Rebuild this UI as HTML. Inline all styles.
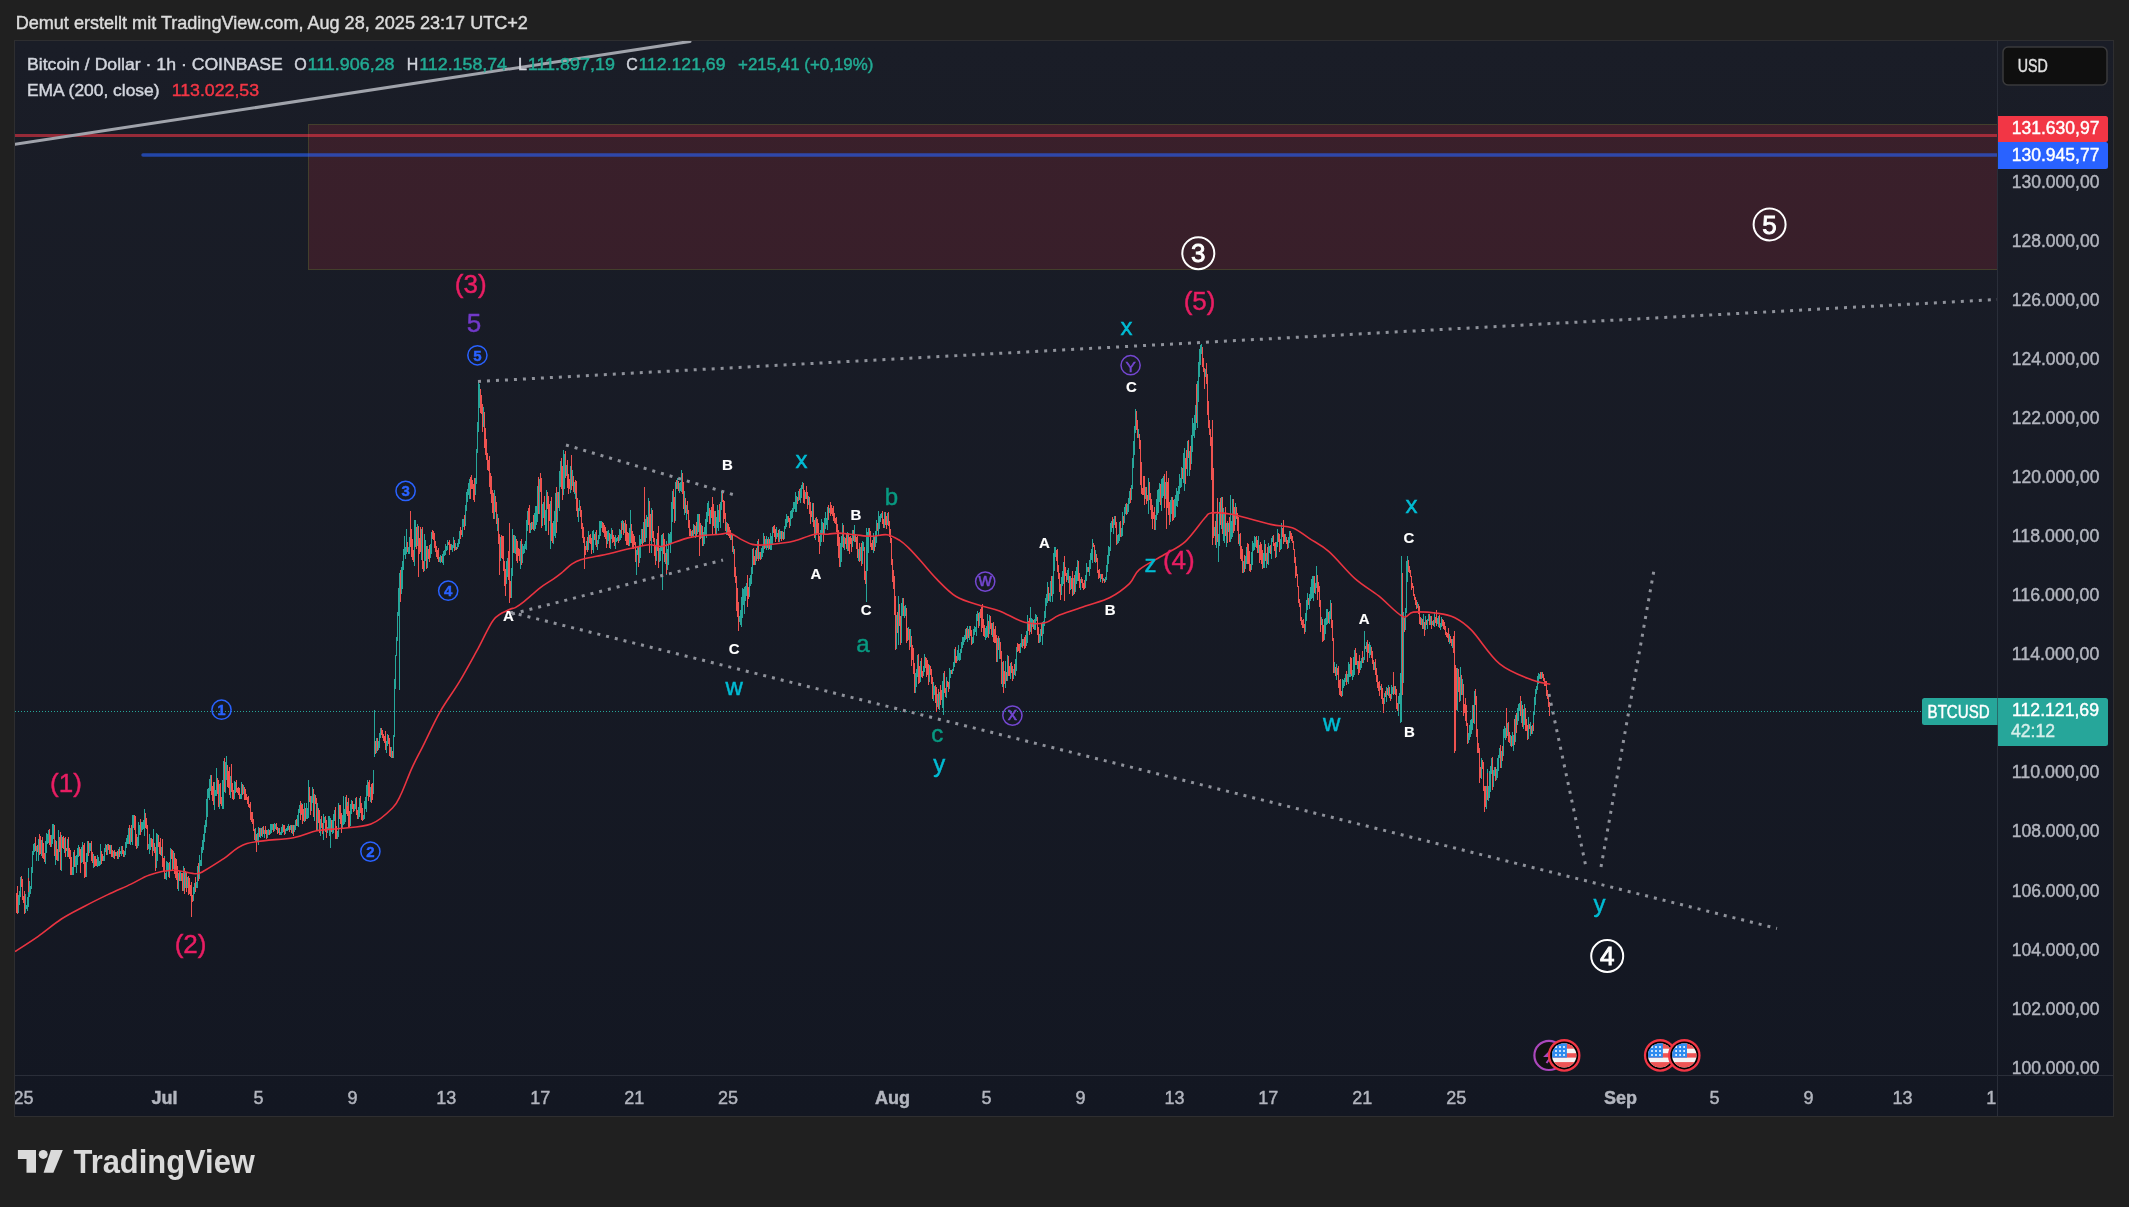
<!DOCTYPE html>
<html><head><meta charset="utf-8"><style>
html,body{margin:0;padding:0;background:#202020;width:2129px;height:1207px;overflow:hidden}
svg{position:absolute;left:0;top:0;font-family:"Liberation Sans", sans-serif}
</style></head><body>
<svg width="2129" height="1207" viewBox="0 0 2129 1207" style="will-change:transform">
<defs><clipPath id="taxis"><rect x="15" y="1076" width="1982" height="39"/></clipPath><clipPath id="paxis"><rect x="1998" y="41" width="115" height="1034"/></clipPath></defs>
<defs><linearGradient id="bg" x1="0" y1="0" x2="0" y2="1"><stop offset="0" stop-color="#1a1d27"/><stop offset="1" stop-color="#131722"/></linearGradient><clipPath id="pane"><rect x="15" y="41" width="1982" height="1034"/></clipPath></defs><rect x="14.5" y="40.5" width="2099" height="1076" fill="url(#bg)" stroke="#2e2e30" stroke-width="1"/><path d="M1997.5 41V1116M15 1075.5H2113" stroke="#2a2e39" stroke-width="1" fill="none"/><g clip-path="url(#pane)"><rect x="308.5" y="124.5" width="1700" height="145" fill="#f23645" fill-opacity="0.15" stroke="#433f2c" stroke-width="1"/><path d="M15 135.5H1997" stroke="#f23645" stroke-opacity="0.58" stroke-width="3"/><path d="M143 155H1997" stroke="#2962ff" stroke-opacity="0.6" stroke-width="3.5" stroke-linecap="round"/><path d="M15 144.3L690 41.4" stroke="#a0a3ab" stroke-width="3" stroke-linecap="round"/><path d="M15 711.5H1997" stroke="#26a69a" stroke-width="1" stroke-dasharray="1 2"/><g shape-rendering="crispEdges" stroke-width="1"><path d="M18.5 895V913M19.5 891V905M20.5 877V897M25.5 894V913M26.5 905V909M27.5 897V911M28.5 868V907M29.5 881V897M30.5 886V894M31.5 867V889M32.5 851V873M33.5 844V855M34.5 843V852M36.5 846V861M38.5 839V861M41.5 840V856M45.5 841V864M46.5 833V853M47.5 834V844M48.5 830V843M51.5 835V847M52.5 824V844M53.5 824V839M55.5 840V865M58.5 830V861M61.5 835V871M64.5 838V853M67.5 839V857M72.5 867V875M73.5 863V875M73.5 852V871M75.5 856V867M76.5 855V873M77.5 848V865M78.5 845V857M81.5 847V863M82.5 842V862M86.5 853V877M87.5 841V862M89.5 843V853M90.5 843V851M93.5 854V868M97.5 855V867M98.5 857V866M99.5 861V866M100.5 844V865M103.5 856V861M104.5 848V861M105.5 844V852M107.5 844V855M110.5 845V854M113.5 851V858M116.5 852V856M118.5 849V859M119.5 847V855M120.5 851V854M121.5 846V856M124.5 851V857M125.5 842V855M126.5 838V848M127.5 835V844M128.5 828V844M130.5 828V845M132.5 815V845M133.5 815V828M137.5 837V848M138.5 822V846M139.5 825V835M141.5 822V832M142.5 822V830M143.5 820V829M144.5 809V836M148.5 844V849M149.5 834V854M150.5 838V850M153.5 829V851M156.5 833V868M157.5 834V861M161.5 847V856M164.5 856V867M165.5 873V879M166.5 861V880M167.5 862V870M168.5 863V877M170.5 848V870M173.5 851V869M178.5 873V891M180.5 871V881M183.5 866V891M185.5 871V888M187.5 877V888M193.5 887V901M194.5 883V894M196.5 882V888M197.5 866V888M199.5 855V879M200.5 860V866M201.5 847V866M202.5 840V853M203.5 834V850M204.5 825V842M205.5 820V833M206.5 799V827M207.5 789V817M208.5 788V798M209.5 779V800M210.5 779V791M210.5 775V790M214.5 782V810M215.5 790V796M216.5 768V796M219.5 784V809M222.5 780V809M223.5 761V809M225.5 762V793M226.5 756V780M230.5 776V798M234.5 781V799M235.5 782V793M240.5 794V799M241.5 782V799M243.5 785V794M255.5 828V841M256.5 834V846M257.5 833V841M258.5 827V845M260.5 828V838M262.5 827V837M264.5 830V838M267.5 830V838M268.5 829V835M270.5 824V834M271.5 824V833M272.5 824V830M274.5 823V831M275.5 824V829M278.5 828V833M280.5 832V835M281.5 827V835M282.5 824V833M285.5 829V834M286.5 828V831M287.5 826V831M288.5 824V830M290.5 825V830M292.5 825V834M294.5 825V832M295.5 820V830M297.5 815V826M298.5 809V827M299.5 805V813M301.5 803V815M304.5 803V822M306.5 803V819M307.5 808V819M308.5 780V818M311.5 796V811M312.5 787V803M314.5 794V821M317.5 803V830M320.5 819V836M323.5 814V840M324.5 817V823M327.5 827V833M328.5 816V830M329.5 816V836M330.5 818V848M332.5 820V834M333.5 814V833M334.5 810V821M337.5 831V839M338.5 803V837M342.5 815V828M343.5 796V825M344.5 809V824M345.5 797V822M347.5 802V816M350.5 804V826M351.5 800V814M354.5 804V811M355.5 798V809M358.5 807V819M359.5 798V817M363.5 815V820M364.5 801V819M365.5 797V809M366.5 785V812M367.5 780V796M370.5 787V802M373.5 770V794M374.5 710V757M376.5 738V753M378.5 741V750M379.5 733V748M380.5 728V738M386.5 741V753M387.5 734V746M391.5 747V758M393.5 742V758M393.5 735V751M394.5 679V737M395.5 655V689M396.5 637V656M397.5 612V641M398.5 588V616M399.5 573V690M401.5 567V594M402.5 561V589M403.5 549V570M404.5 536V555M405.5 547V559M406.5 529V554M408.5 547V554M409.5 537V554M414.5 520V566M415.5 520V547M417.5 524V546M421.5 529V560M424.5 534V571M425.5 540V561M427.5 546V568M430.5 544V558M431.5 532V554M439.5 557V562M440.5 555V563M442.5 554V563M443.5 551V565M444.5 550V556M445.5 544V555M446.5 546V551M447.5 540V550M451.5 544V550M452.5 545V552M453.5 537V548M455.5 543V550M457.5 543V549M458.5 539V547M459.5 531V544M462.5 519V537M463.5 519V527M465.5 505V526M466.5 492V511M467.5 489V502M468.5 483V495M469.5 479V499M475.5 478V495M476.5 449V484M477.5 422V453M478.5 382V432M479.5 384V408M483.5 407V427M494.5 490V519M497.5 514V531M500.5 537V561M506.5 561V584M507.5 558V577M511.5 568V598M512.5 529V576M514.5 535V553M515.5 536V554M520.5 541V569M522.5 544V563M523.5 546V554M524.5 544V553M525.5 541V549M526.5 520V550M527.5 511V531M530.5 523V533M532.5 522V529M534.5 513V531M535.5 506V529M536.5 506V525M537.5 486V522M539.5 479V514M542.5 504V526M543.5 502V518M545.5 510V531M546.5 490V531M550.5 501V549M553.5 521V544M554.5 511V536M555.5 493V538M557.5 492V522M559.5 471V511M560.5 461V487M563.5 450V495M564.5 454V489M566.5 465V476M570.5 466V493M572.5 470V486M574.5 482V494M575.5 482V499M578.5 508V522M579.5 500V511M586.5 541V550M588.5 531V550M592.5 531V550M593.5 530V553M595.5 532V545M597.5 540V550M598.5 535V544M599.5 521V539M600.5 521V536M601.5 521V528M607.5 531V544M608.5 530V541M610.5 534V549M611.5 528V539M615.5 535V549M616.5 538V542M617.5 537V541M619.5 529V541M620.5 530V540M621.5 521V538M622.5 520V530M624.5 523V533M629.5 528V546M630.5 510V543M636.5 550V575M637.5 546V555M639.5 535V563M640.5 539V558M641.5 529V544M643.5 522V543M645.5 519V542M646.5 515V538M648.5 498V527M651.5 508V553M656.5 539V561M659.5 548V562M660.5 547V561M661.5 535V551M662.5 534V590M665.5 553V564M666.5 541V575M667.5 549V570M668.5 533V565M669.5 534V545M670.5 532V553M671.5 502V544M672.5 491V522M675.5 482V521M677.5 478V489M679.5 483V493M680.5 482V491M681.5 470V492M684.5 491V515M686.5 505V520M691.5 531V537M693.5 524V537M695.5 526V538M697.5 514V534M698.5 514V532M701.5 525V538M703.5 532V546M704.5 527V544M705.5 519V535M706.5 512V538M707.5 503V522M708.5 501V516M710.5 510V524M712.5 504V522M714.5 511V528M716.5 517V534M717.5 505V528M718.5 510V531M720.5 502V528M721.5 491V510M726.5 522V535M731.5 534V540M733.5 546V554M739.5 616V622M740.5 610V625M741.5 597V627M742.5 588V618M743.5 589V605M744.5 587V614M745.5 586V601M746.5 583V596M749.5 578V597M750.5 575V586M751.5 567V584M752.5 549V574M755.5 550V565M757.5 553V559M757.5 541V558M759.5 552V559M761.5 548V559M762.5 546V557M763.5 533V553M765.5 539V548M766.5 536V550M768.5 537V550M770.5 533V550M771.5 536V550M772.5 527V545M776.5 527V539M777.5 533V537M779.5 529V542M780.5 531V539M782.5 531V539M784.5 526V539M785.5 519V529M786.5 514V527M787.5 516V523M790.5 511V526M791.5 510V519M792.5 508V518M793.5 502V512M794.5 502V509M795.5 492V512M796.5 496V512M798.5 491V501M800.5 488V503M801.5 485V498M802.5 482V489M805.5 492V499M808.5 496V505M812.5 503V522M815.5 518V540M820.5 530V546M821.5 519V542M822.5 522V534M824.5 518V535M825.5 512V529M826.5 518V525M827.5 507V530M829.5 508V513M840.5 543V567M841.5 536V562M842.5 523V547M844.5 537V550M847.5 532V551M849.5 537V548M852.5 530V547M854.5 525V542M858.5 549V561M860.5 547V561M862.5 541V564M863.5 542V551M866.5 528V602M867.5 532V571M868.5 528V553M873.5 533V553M875.5 531V547M876.5 520V543M878.5 511V536M879.5 516V529M880.5 514V522M881.5 513V518M884.5 512V528M887.5 513V525M896.5 615V649M898.5 596V645M901.5 603V643M902.5 598V616M904.5 606V618M905.5 605V616M908.5 627V640M910.5 629V647M915.5 673V693M916.5 669V687M917.5 655V677M920.5 661V682M923.5 666V676M924.5 654V672M929.5 665V682M933.5 682V701M934.5 686V695M937.5 694V707M939.5 692V710M940.5 691V699M942.5 681V708M943.5 673V715M946.5 677V698M949.5 668V689M950.5 670V678M952.5 669V674M953.5 662V671M954.5 649V667M957.5 650V661M958.5 645V660M959.5 653V661M960.5 649V660M961.5 642V653M962.5 637V648M963.5 637V645M964.5 635V642M965.5 629V640M967.5 626V642M969.5 626V640M972.5 637V644M973.5 629V643M974.5 626V635M975.5 627V632M976.5 614V636M977.5 611V621M979.5 612V626M985.5 630V639M985.5 628V640M986.5 626V638M987.5 614V637M989.5 615V634M992.5 623V637M997.5 638V662M999.5 638V659M1002.5 662V687M1005.5 661V688M1007.5 655V681M1010.5 663V679M1013.5 669V679M1015.5 659V676M1016.5 647V671M1020.5 643V653M1021.5 634V647M1023.5 639V646M1026.5 631V646M1027.5 615V643M1030.5 607V632M1031.5 618V631M1032.5 619V627M1034.5 619V630M1035.5 614V630M1036.5 615V621M1039.5 634V643M1040.5 629V642M1042.5 622V645M1043.5 621V634M1044.5 611V626M1045.5 598V618M1046.5 594V606M1047.5 582V603M1049.5 593V601M1050.5 581V602M1052.5 576V602M1053.5 553V594M1054.5 547V571M1055.5 547V557M1061.5 577V595M1062.5 571V586M1063.5 562V584M1067.5 570V580M1068.5 568V583M1070.5 576V590M1073.5 578V595M1075.5 571V592M1076.5 567V584M1077.5 563V581M1077.5 560V569M1080.5 579V590M1085.5 575V588M1086.5 563V581M1087.5 567V572M1089.5 560V576M1090.5 553V569M1091.5 549V560M1092.5 539V563M1095.5 550V563M1100.5 574V582M1103.5 578V581M1105.5 577V582M1106.5 565V580M1107.5 555V572M1108.5 546V564M1109.5 547V556M1110.5 523V551M1111.5 521V532M1113.5 519V534M1114.5 516V525M1117.5 535V544M1118.5 534V543M1119.5 522V541M1121.5 528V537M1122.5 525V536M1122.5 512V531M1124.5 507V523M1125.5 504V514M1127.5 504V514M1128.5 498V512M1129.5 491V504M1131.5 485V500M1132.5 458V489M1133.5 441V468M1134.5 426V455M1135.5 409V433M1138.5 429V438M1145.5 487V499M1148.5 478V514M1155.5 515V530M1156.5 499V520M1157.5 490V515M1158.5 489V513M1159.5 483V502M1161.5 479V511M1162.5 478V498M1163.5 476V496M1165.5 482V499M1170.5 500V522M1171.5 497V514M1174.5 499V518M1175.5 495V517M1176.5 488V506M1177.5 491V507M1178.5 486V501M1179.5 474V494M1180.5 478V488M1181.5 467V487M1183.5 453V483M1184.5 448V491M1187.5 441V476M1189.5 451V476M1191.5 435V464M1192.5 418V452M1193.5 423V436M1194.5 415V438M1195.5 405V430M1197.5 381V428M1198.5 362V402M1199.5 349V377M1200.5 345V365M1201.5 344V354M1205.5 369V377M1214.5 527V536M1216.5 514V548M1218.5 534V562M1219.5 502V546M1221.5 497V529M1223.5 508V541M1224.5 514V543M1226.5 523V547M1228.5 523V532M1230.5 495V542M1231.5 521V539M1232.5 499V537M1235.5 503V525M1239.5 534V546M1243.5 561V573M1245.5 556V569M1246.5 547V564M1251.5 552V570M1252.5 541V565M1253.5 543V551M1254.5 536V550M1255.5 537V547M1258.5 536V553M1263.5 553V568M1264.5 540V568M1266.5 553V568M1268.5 543V565M1269.5 546V553M1271.5 538V559M1272.5 536V542M1276.5 542V557M1277.5 529V547M1280.5 539V550M1281.5 523V549M1285.5 534V542M1288.5 537V548M1289.5 531V543M1305.5 623V632M1305.5 613V626M1306.5 600V621M1307.5 593V610M1309.5 594V609M1310.5 587V601M1311.5 579V599M1312.5 576V598M1313.5 576V601M1315.5 583V594M1316.5 566V588M1321.5 617V625M1324.5 619V640M1325.5 618V634M1326.5 609V625M1327.5 609V624M1329.5 611V624M1330.5 600V619M1334.5 662V673M1336.5 664V680M1342.5 679V696M1343.5 680V688M1344.5 678V686M1345.5 674V682M1347.5 674V682M1348.5 662V684M1349.5 664V677M1350.5 658V677M1352.5 670V680M1353.5 657V677M1354.5 650V675M1357.5 661V669M1360.5 661V670M1361.5 658V668M1363.5 657V663M1364.5 631V660M1366.5 642V652M1369.5 642V658M1370.5 645V655M1374.5 662V670M1380.5 686V690M1384.5 693V704M1386.5 687V702M1388.5 685V696M1391.5 685V699M1392.5 687V694M1394.5 686V694M1398.5 696V716M1399.5 693V704M1400.5 673V723M1401.5 556V722M1403.5 612V683M1405.5 608V630M1406.5 561V613M1407.5 556V582M1417.5 602V608M1421.5 618V625M1423.5 614V629M1425.5 616V630M1427.5 619V629M1428.5 614V621M1430.5 616V625M1432.5 621V625M1434.5 612V627M1437.5 618V624M1438.5 616V627M1440.5 623V630M1441.5 618V627M1441.5 617V624M1449.5 634V644M1452.5 639V648M1457.5 668V711M1460.5 667V701M1462.5 679V695M1468.5 733V743M1469.5 725V740M1470.5 720V737M1471.5 719V734M1472.5 705V730M1474.5 691V724M1481.5 758V779M1486.5 786V809M1487.5 769V798M1488.5 786V801M1489.5 771V798M1490.5 766V792M1491.5 758V774M1493.5 770V787M1494.5 767V776M1496.5 769V780M1497.5 758V778M1498.5 755V771M1499.5 748V758M1501.5 751V768M1503.5 729V756M1504.5 726V738M1505.5 728V740M1507.5 723V736M1510.5 735V746M1512.5 732V746M1513.5 735V751M1515.5 715V742M1517.5 708V725M1518.5 704V721M1519.5 703V711M1521.5 701V723M1523.5 709V729M1524.5 704V725M1528.5 717V739M1530.5 722V736M1532.5 725V734M1533.5 712V729M1534.5 697V715M1535.5 689V705M1536.5 686V694M1537.5 676V690M1538.5 673V684M1539.5 674V679M1541.5 672V679" stroke="#26a69a"/><path d="M16.5 893V913M17.5 886V914M21.5 876V887M22.5 879V900M23.5 896V903M24.5 891V914M28.5 878V892M35.5 837V851M37.5 845V852M39.5 834V855M40.5 836V854M42.5 837V858M43.5 843V859M44.5 853V862M49.5 829V845M50.5 835V847M54.5 825V856M56.5 841V860M57.5 849V861M59.5 837V852M60.5 832V870M62.5 837V848M63.5 836V849M65.5 837V857M66.5 848V851M68.5 837V857M69.5 848V859M70.5 850V875M71.5 857V875M74.5 850V867M79.5 847V856M80.5 849V873M83.5 845V864M84.5 843V878M85.5 862V877M88.5 841V856M91.5 841V861M92.5 852V863M94.5 856V867M95.5 856V866M96.5 859V866M101.5 851V864M102.5 854V861M106.5 845V855M108.5 844V850M109.5 845V854M111.5 845V857M112.5 850V857M114.5 850V859M115.5 852V856M117.5 851V859M119.5 849V857M122.5 846V854M123.5 850V857M129.5 825V844M131.5 825V842M134.5 815V830M135.5 816V846M136.5 834V849M140.5 819V835M145.5 813V828M146.5 818V829M147.5 825V850M151.5 838V847M152.5 839V856M154.5 843V853M155.5 847V871M158.5 835V847M159.5 842V854M160.5 838V855M162.5 839V867M163.5 858V872M164.5 858V879M169.5 862V878M171.5 849V859M172.5 850V871M174.5 853V874M175.5 858V878M176.5 859V880M177.5 866V889M179.5 871V881M181.5 873V881M182.5 873V891M184.5 868V894M186.5 873V892M188.5 876V895M189.5 878V894M190.5 885V896M191.5 882V917M192.5 895V902M195.5 877V892M198.5 863V881M211.5 775V795M212.5 786V801M213.5 782V805M217.5 778V794M218.5 780V807M220.5 783V804M221.5 797V806M224.5 758V792M227.5 765V787M228.5 771V788M229.5 767V795M231.5 764V792M232.5 783V799M233.5 790V800M236.5 780V792M237.5 788V793M238.5 787V795M239.5 788V799M242.5 784V795M244.5 787V800M245.5 789V800M246.5 794V800M247.5 797V804M248.5 796V807M249.5 804V808M250.5 802V820M251.5 812V822M252.5 812V824M253.5 819V831M254.5 829V840M256.5 834V852M259.5 828V837M261.5 828V836M263.5 826V834M265.5 826V834M266.5 830V839M269.5 830V835M273.5 824V832M276.5 823V830M277.5 827V834M279.5 828V835M283.5 825V832M284.5 825V835M289.5 826V832M291.5 825V833M293.5 825V836M296.5 819V826M300.5 801V820M301.5 805V814M302.5 804V824M303.5 809V821M305.5 808V821M309.5 787V802M310.5 796V815M313.5 789V817M315.5 795V804M316.5 798V830M318.5 808V823M319.5 810V833M321.5 816V828M322.5 823V834M325.5 816V832M326.5 820V838M331.5 820V832M335.5 807V839M336.5 826V839M339.5 805V819M340.5 805V824M341.5 813V833M346.5 795V814M347.5 806V816M348.5 798V827M349.5 811V827M352.5 801V809M353.5 804V812M356.5 797V815M357.5 810V819M360.5 796V813M361.5 803V820M362.5 808V821M368.5 782V801M369.5 780V797M371.5 784V803M372.5 783V800M375.5 741V754M377.5 738V751M381.5 728V735M382.5 730V738M383.5 734V741M384.5 736V743M385.5 731V750M388.5 735V744M389.5 738V756M390.5 747V757M392.5 751V758M400.5 570V602M407.5 542V552M410.5 511V547M411.5 529V557M412.5 539V560M413.5 550V562M416.5 527V549M418.5 526V577M419.5 538V554M420.5 527V552M422.5 527V569M423.5 561V572M426.5 546V569M428.5 549V559M429.5 545V562M432.5 530V539M433.5 531V540M434.5 533V548M435.5 541V552M436.5 546V557M437.5 550V559M438.5 552V562M438.5 548V562M441.5 556V562M448.5 542V545M449.5 540V555M450.5 544V550M454.5 540V551M456.5 547V550M460.5 527V539M461.5 530V535M464.5 515V530M470.5 477V499M471.5 475V489M472.5 480V489M473.5 484V500M474.5 478V502M480.5 389V413M481.5 395V414M482.5 404V432M484.5 412V422M484.5 416V448M485.5 428V455M486.5 439V460M487.5 453V470M488.5 460V471M489.5 456V487M490.5 473V494M491.5 476V503M492.5 490V513M493.5 493V519M495.5 496V512M496.5 502V524M498.5 518V544M499.5 534V575M501.5 535V558M502.5 536V559M503.5 536V571M504.5 561V586M505.5 569V596M508.5 551V580M509.5 523V603M510.5 581V598M513.5 535V553M516.5 539V561M517.5 541V563M518.5 548V556M519.5 549V561M521.5 539V565M528.5 508V525M529.5 505V523M529.5 514V533M531.5 522V530M533.5 515V530M538.5 477V514M540.5 473V492M541.5 478V528M544.5 496V525M547.5 492V509M548.5 496V535M549.5 504V521M551.5 497V541M552.5 523V543M556.5 487V533M558.5 492V508M561.5 458V489M562.5 466V500M565.5 451V478M567.5 460V488M568.5 474V494M569.5 479V489M571.5 455V490M573.5 476V492M575.5 480V493M576.5 481V511M577.5 498V517M580.5 506V517M581.5 510V529M582.5 523V538M583.5 527V543M584.5 537V569M585.5 546V555M587.5 537V552M589.5 535V543M590.5 534V544M591.5 538V554M594.5 534V540M596.5 530V547M602.5 522V532M603.5 523V533M604.5 525V537M605.5 527V539M606.5 531V548M609.5 533V548M612.5 530V543M613.5 535V542M614.5 537V546M618.5 535V543M621.5 523V534M623.5 521V535M625.5 520V541M626.5 524V545M627.5 532V545M628.5 533V546M631.5 524V543M632.5 531V549M633.5 534V549M634.5 536V545M635.5 542V562M638.5 547V567M642.5 529V545M644.5 487V542M647.5 517V527M649.5 501V553M650.5 514V541M652.5 510V538M653.5 531V542M654.5 538V556M655.5 545V565M657.5 533V551M658.5 526V568M663.5 533V554M664.5 539V562M666.5 553V574M673.5 489V509M674.5 497V523M676.5 480V489M678.5 481V491M682.5 473V494M683.5 482V509M685.5 498V513M687.5 501V514M688.5 510V528M689.5 520V536M690.5 529V536M692.5 530V536M694.5 525V534M696.5 522V537M699.5 514V556M700.5 523V539M702.5 526V546M709.5 508V524M711.5 507V518M712.5 497V534M713.5 504V526M715.5 511V534M719.5 504V522M722.5 491V502M723.5 500V523M724.5 501V519M725.5 513V531M727.5 523V535M728.5 524V536M729.5 527V538M730.5 530V540M732.5 535V552M734.5 549V577M735.5 567V583M736.5 576V611M737.5 588V617M738.5 602V631M747.5 575V607M748.5 587V599M753.5 548V565M754.5 556V565M756.5 548V561M758.5 539V561M760.5 552V560M764.5 536V549M767.5 539V548M769.5 539V549M773.5 526V533M774.5 525V537M775.5 529V542M778.5 530V542M781.5 531V541M783.5 532V540M788.5 516V522M789.5 518V528M797.5 497V504M799.5 489V500M803.5 483V487M803.5 483V503M804.5 490V504M806.5 486V499M807.5 492V509M809.5 497V514M810.5 502V524M811.5 511V517M813.5 503V527M814.5 520V538M816.5 517V535M817.5 519V533M818.5 523V542M819.5 536V554M823.5 523V542M828.5 505V520M830.5 502V516M831.5 505V514M832.5 508V516M833.5 506V521M834.5 513V523M835.5 518V524M836.5 517V532M837.5 524V546M838.5 530V558M839.5 537V567M843.5 525V548M845.5 538V544M846.5 533V549M848.5 533V551M849.5 537V554M850.5 536V544M851.5 538V552M853.5 530V541M855.5 534V542M856.5 537V549M857.5 536V558M859.5 543V562M861.5 543V566M864.5 547V580M865.5 571V584M869.5 528V537M870.5 531V547M871.5 543V550M872.5 540V550M874.5 537V551M877.5 523V531M882.5 511V524M883.5 519V528M885.5 512V525M886.5 516V529M888.5 512V526M889.5 521V537M890.5 529V543M891.5 538V565M892.5 559V582M893.5 570V589M894.5 576V615M894.5 586V605M895.5 596V650M897.5 612V633M899.5 604V626M900.5 616V645M903.5 598V616M906.5 608V643M907.5 628V641M909.5 629V650M911.5 636V666M912.5 645V660M913.5 648V674M914.5 663V693M918.5 654V684M919.5 666V683M921.5 658V677M922.5 671V678M925.5 657V668M926.5 658V677M927.5 660V675M928.5 664V685M930.5 666V675M931.5 669V684M932.5 677V699M935.5 685V703M936.5 687V712M938.5 689V709M940.5 685V705M941.5 690V700M944.5 671V693M945.5 688V697M947.5 681V687M948.5 682V692M951.5 670V674M955.5 647V663M956.5 656V663M966.5 628V639M968.5 629V638M970.5 626V636M971.5 630V645M978.5 613V628M980.5 609V618M981.5 607V632M982.5 604V628M983.5 619V636M984.5 625V637M988.5 621V638M990.5 616V629M991.5 623V635M993.5 622V642M994.5 629V643M995.5 626V643M996.5 635V662M998.5 636V650M1000.5 642V659M1001.5 651V684M1003.5 661V693M1004.5 671V684M1006.5 672V681M1008.5 656V676M1009.5 666V676M1011.5 662V673M1012.5 666V681M1014.5 664V675M1017.5 643V652M1018.5 644V651M1019.5 644V653M1022.5 639V648M1024.5 637V649M1025.5 635V648M1028.5 621V631M1029.5 618V635M1031.5 623V634M1033.5 620V629M1037.5 617V635M1038.5 627V643M1041.5 624V636M1048.5 587V601M1051.5 576V596M1056.5 550V561M1057.5 549V572M1058.5 565V579M1059.5 573V592M1060.5 584V600M1064.5 556V601M1065.5 567V576M1066.5 573V582M1069.5 576V594M1071.5 578V589M1072.5 571V596M1074.5 575V594M1078.5 561V581M1079.5 573V588M1081.5 577V583M1082.5 579V588M1083.5 583V590M1084.5 580V589M1088.5 567V572M1093.5 543V547M1094.5 545V562M1096.5 554V562M1097.5 558V573M1098.5 570V579M1099.5 569V578M1101.5 574V579M1102.5 574V583M1104.5 579V583M1112.5 517V528M1115.5 516V528M1116.5 522V545M1120.5 521V537M1123.5 516V525M1126.5 503V515M1130.5 488V503M1136.5 411V430M1137.5 420V438M1139.5 434V449M1140.5 440V485M1141.5 462V494M1142.5 488V495M1143.5 476V495M1144.5 476V505M1146.5 487V504M1147.5 495V501M1149.5 482V500M1150.5 493V510M1151.5 499V519M1152.5 505V529M1153.5 512V519M1154.5 507V530M1160.5 484V505M1164.5 474V508M1166.5 471V529M1167.5 482V508M1168.5 478V508M1168.5 500V515M1169.5 502V525M1172.5 497V521M1173.5 500V520M1182.5 468V479M1185.5 458V484M1186.5 450V469M1188.5 440V458M1190.5 446V470M1196.5 384V423M1202.5 347V367M1203.5 358V372M1204.5 368V389M1206.5 363V384M1207.5 374V415M1208.5 401V428M1209.5 420V435M1210.5 429V446M1211.5 437V480M1212.5 420V545M1213.5 468V513M1213.5 498V538M1215.5 521V545M1217.5 498V542M1220.5 498V525M1222.5 497V534M1225.5 507V536M1227.5 521V543M1229.5 517V542M1233.5 499V533M1234.5 507V531M1236.5 507V519M1237.5 513V531M1238.5 517V544M1240.5 533V559M1241.5 546V561M1242.5 549V573M1244.5 555V572M1247.5 543V564M1248.5 544V564M1249.5 551V571M1250.5 564V572M1256.5 536V548M1257.5 540V553M1259.5 545V552M1259.5 547V563M1260.5 542V560M1261.5 544V564M1262.5 550V569M1265.5 544V561M1267.5 547V564M1270.5 545V554M1273.5 535V546M1274.5 543V551M1275.5 542V558M1278.5 533V542M1279.5 534V552M1282.5 528V537M1283.5 520V544M1284.5 534V542M1286.5 537V544M1287.5 540V549M1290.5 531V539M1291.5 533V541M1292.5 536V543M1293.5 541V550M1294.5 549V563M1295.5 557V578M1296.5 566V576M1297.5 574V587M1298.5 586V603M1299.5 599V607M1300.5 603V621M1301.5 617V625M1302.5 620V628M1303.5 619V628M1304.5 624V634M1308.5 598V605M1314.5 576V593M1317.5 575V600M1318.5 582V592M1319.5 586V607M1320.5 600V632M1322.5 619V642M1323.5 625V641M1328.5 612V623M1331.5 603V628M1332.5 620V641M1333.5 638V673M1335.5 667V676M1337.5 668V675M1338.5 666V688M1339.5 680V695M1340.5 679V696M1341.5 691V697M1346.5 671V685M1350.5 657V674M1351.5 658V676M1355.5 648V665M1356.5 653V665M1358.5 661V675M1359.5 655V673M1362.5 651V663M1365.5 646V649M1367.5 640V662M1368.5 644V653M1371.5 647V658M1372.5 651V664M1373.5 660V670M1375.5 659V675M1376.5 668V682M1377.5 675V688M1378.5 682V691M1379.5 681V696M1381.5 684V699M1382.5 688V704M1383.5 698V713M1385.5 691V697M1387.5 688V695M1389.5 687V698M1390.5 694V701M1393.5 672V695M1395.5 686V695M1396.5 689V705M1396.5 696V709M1397.5 703V711M1402.5 573V695M1404.5 618V632M1408.5 560V572M1409.5 566V573M1410.5 570V577M1411.5 576V590M1412.5 583V588M1413.5 586V596M1414.5 594V600M1415.5 597V605M1416.5 600V609M1418.5 604V614M1419.5 606V624M1420.5 617V625M1422.5 619V629M1424.5 622V636M1426.5 620V625M1429.5 614V625M1431.5 616V629M1433.5 620V626M1435.5 617V623M1436.5 610V626M1439.5 615V628M1442.5 619V626M1443.5 620V629M1444.5 622V630M1445.5 626V635M1446.5 632V637M1447.5 633V638M1448.5 628V642M1450.5 636V643M1451.5 639V646M1453.5 636V653M1454.5 631V753M1455.5 665V751M1456.5 668V710M1458.5 669V692M1459.5 677V702M1461.5 675V695M1463.5 684V716M1464.5 704V713M1465.5 698V721M1466.5 705V726M1467.5 723V744M1473.5 705V723M1475.5 689V705M1476.5 696V737M1477.5 729V753M1478.5 743V753M1479.5 748V783M1480.5 767V778M1482.5 760V769M1483.5 762V791M1484.5 786V812M1485.5 786V807M1487.5 773V800M1492.5 757V790M1495.5 767V781M1500.5 745V768M1502.5 746V761M1506.5 708V738M1508.5 722V742M1509.5 732V743M1511.5 736V747M1514.5 719V745M1516.5 713V733M1520.5 696V716M1522.5 705V727M1525.5 708V731M1526.5 719V731M1527.5 725V740M1529.5 724V729M1531.5 726V734M1533.5 723V731M1540.5 672V679M1542.5 672V678M1543.5 674V681M1544.5 678V686M1545.5 681V686M1546.5 681V696M1547.5 690V699M1548.5 694V707M1549.5 702V716" stroke="#ef5350"/></g><path d="M15.0 951.5C18.9 949.0 30.5 941.7 38.2 936.3C45.9 930.9 53.7 924.0 61.4 919.0C69.1 914.0 76.9 910.3 84.6 906.2C92.3 902.1 100.1 898.3 107.8 894.6C115.5 890.9 124.0 887.4 131.0 884.1C137.9 880.8 142.6 877.2 149.5 874.9C156.4 872.6 164.9 870.4 172.7 870.2C180.4 870.0 190.6 873.7 196.0 873.7C201.4 873.7 200.6 872.7 205.2 870.2C209.8 867.7 216.8 863.1 223.8 858.6C230.8 854.1 235.4 847.0 247.0 843.5C258.6 840.0 281.8 839.8 293.4 837.7C305.0 835.6 308.9 832.3 316.6 830.8C324.3 829.3 330.7 829.6 339.8 828.5C348.9 827.4 362.2 827.5 371.0 824.1C379.8 820.7 387.5 813.0 392.5 808.0C397.5 803.0 397.9 800.6 401.1 794.0C404.3 787.4 408.3 776.0 411.9 768.1C415.5 760.2 418.0 755.9 422.7 746.6C427.4 737.3 433.8 722.9 439.9 712.1C446.0 701.3 452.8 692.7 459.3 681.9C465.8 671.1 472.9 657.8 478.7 647.4C484.4 637.0 488.8 625.7 493.8 619.4C498.8 613.1 505.3 611.7 508.9 609.7C512.5 607.7 512.7 609.0 515.3 607.6C517.9 606.2 520.2 604.7 524.3 601.4C528.4 598.1 535.2 591.6 540.1 587.8C545.0 584.0 549.9 581.4 553.6 578.8C557.4 576.2 559.6 574.4 562.6 572.0C565.6 569.6 568.7 566.2 571.7 564.2C574.7 562.2 576.6 561.0 580.7 559.7C584.8 558.4 592.0 557.2 596.5 556.3C601.0 555.3 602.1 555.3 607.7 554.0C613.3 552.7 623.3 550.0 630.3 548.5C637.3 547.0 644.1 545.2 649.5 544.8C654.9 544.4 656.0 547.4 662.8 546.2C669.5 545.0 680.5 539.4 690.0 537.4C699.5 535.4 713.4 534.9 720.0 534.2C726.6 533.5 726.1 532.2 729.7 533.1C733.3 534.0 737.8 537.7 741.6 539.6C745.4 541.5 748.7 543.5 752.3 544.4C755.9 545.3 757.7 545.3 763.1 545.0C768.5 544.7 779.3 543.5 784.7 542.8C790.1 542.1 790.4 542.0 795.4 540.6C800.4 539.2 809.4 535.3 814.8 534.2C820.2 533.1 823.8 534.4 827.8 534.2C831.8 534.0 834.0 533.0 838.5 533.1C843.0 533.2 849.3 534.2 854.7 534.7C860.1 535.2 865.5 536.3 870.9 536.3C876.3 536.3 882.1 534.0 887.0 534.7C891.9 535.4 896.4 538.4 900.0 540.6C903.6 542.8 905.1 544.5 908.6 547.9C912.1 551.3 916.4 556.1 921.0 561.3C925.6 566.5 930.6 573.0 936.5 578.9C942.4 584.8 948.7 592.0 956.1 596.5C963.5 601.0 973.7 603.4 980.9 605.8C988.1 608.2 992.3 608.1 999.5 610.9C1006.7 613.6 1016.7 620.3 1024.3 622.3C1031.9 624.3 1039.1 624.0 1045.0 622.8C1050.9 621.6 1052.6 617.9 1059.5 615.1C1066.4 612.3 1077.9 608.7 1086.3 605.8C1094.7 602.9 1102.8 601.2 1110.0 597.5C1117.2 593.8 1124.6 588.2 1129.5 583.6C1134.4 579.0 1133.5 574.4 1139.3 569.6C1145.0 564.8 1156.3 559.5 1164.0 554.8C1171.7 550.1 1178.5 547.8 1185.3 541.6C1192.1 535.4 1200.6 522.6 1205.0 517.8C1209.4 513.0 1206.9 513.4 1211.6 512.9C1216.3 512.4 1223.1 512.6 1233.0 514.5C1242.9 516.4 1260.9 522.2 1270.8 524.4C1280.7 526.6 1285.7 525.3 1292.2 527.7C1298.7 530.1 1303.5 534.6 1309.6 538.6C1315.7 542.6 1321.4 544.9 1329.0 551.6C1336.6 558.3 1346.7 571.2 1355.0 578.6C1363.3 586.0 1370.8 589.6 1378.7 595.9C1386.6 602.2 1396.7 613.7 1402.5 616.4C1408.3 619.1 1407.5 612.6 1413.3 612.1C1419.1 611.6 1430.2 612.3 1437.1 613.2C1443.9 614.1 1448.6 614.6 1454.4 617.5C1460.2 620.4 1464.2 622.7 1471.7 630.4C1479.2 638.1 1489.6 655.6 1499.7 663.9C1509.8 672.2 1523.8 676.7 1532.2 680.1C1540.6 683.5 1547.3 683.6 1550.3 684.3" fill="none" stroke="#ea3441" stroke-width="1.6"/><path d="M478 381.5L1997 299.5" stroke="#8f929b" stroke-width="3" stroke-dasharray="3 6" fill="none"/><path d="M510 612.1L1777 928.5" stroke="#8f929b" stroke-width="3" stroke-dasharray="3 6" fill="none"/><path d="M566 445L733 494.6" stroke="#8f929b" stroke-width="3" stroke-dasharray="3 6" fill="none"/><path d="M512 614L723 560" stroke="#8f929b" stroke-width="3" stroke-dasharray="3 6" fill="none"/><path d="M1549 694L1586 867" stroke="#8f929b" stroke-width="3" stroke-dasharray="3 6" fill="none"/><path d="M1601 867L1654 570" stroke="#8f929b" stroke-width="3" stroke-dasharray="3 6" fill="none"/></g><text x="66" y="792" font-size="26" fill="#e91e63" text-anchor="middle" font-weight="normal" stroke="#e91e63" stroke-width="0.45">(1)</text><text x="190.6" y="953.4" font-size="26" fill="#e91e63" text-anchor="middle" font-weight="normal" stroke="#e91e63" stroke-width="0.45">(2)</text><text x="470.7" y="293" font-size="26" fill="#e91e63" text-anchor="middle" font-weight="normal" stroke="#e91e63" stroke-width="0.45">(3)</text><text x="1178.8" y="568.8" font-size="26" fill="#e91e63" text-anchor="middle" font-weight="normal" stroke="#e91e63" stroke-width="0.45">(4)</text><text x="1199.6" y="310.3" font-size="26" fill="#e91e63" text-anchor="middle" font-weight="normal" stroke="#e91e63" stroke-width="0.45">(5)</text><text x="474" y="331.6" font-size="26" fill="#7239c9" text-anchor="middle" font-weight="normal" stroke="#7239c9" stroke-width="0.45">5</text><circle cx="221.5" cy="709.7" r="9.6" fill="none" stroke="#2962ff" stroke-width="1.5"/><text x="221.5" y="714.95" font-size="15" fill="#2962ff" text-anchor="middle" font-weight="bold" stroke="#2962ff" stroke-width="0.45">1</text><circle cx="370.4" cy="851.6" r="9.6" fill="none" stroke="#2962ff" stroke-width="1.5"/><text x="370.4" y="856.85" font-size="15" fill="#2962ff" text-anchor="middle" font-weight="bold" stroke="#2962ff" stroke-width="0.45">2</text><circle cx="405.6" cy="490.9" r="9.6" fill="none" stroke="#2962ff" stroke-width="1.5"/><text x="405.6" y="496.15" font-size="15" fill="#2962ff" text-anchor="middle" font-weight="bold" stroke="#2962ff" stroke-width="0.45">3</text><circle cx="448.2" cy="590.7" r="9.6" fill="none" stroke="#2962ff" stroke-width="1.5"/><text x="448.2" y="595.95" font-size="15" fill="#2962ff" text-anchor="middle" font-weight="bold" stroke="#2962ff" stroke-width="0.45">4</text><circle cx="477.4" cy="355.3" r="9.6" fill="none" stroke="#2962ff" stroke-width="1.5"/><text x="477.4" y="360.55" font-size="15" fill="#2962ff" text-anchor="middle" font-weight="bold" stroke="#2962ff" stroke-width="0.45">5</text><circle cx="1198.3" cy="253.2" r="16" fill="none" stroke="#ffffff" stroke-width="2"/><text x="1198.3" y="262.3" font-size="26" fill="#ffffff" text-anchor="middle" font-weight="normal" stroke="#ffffff" stroke-width="0.9">3</text><circle cx="1769.6" cy="224.4" r="16" fill="none" stroke="#ffffff" stroke-width="2"/><text x="1769.6" y="233.5" font-size="26" fill="#ffffff" text-anchor="middle" font-weight="normal" stroke="#ffffff" stroke-width="0.9">5</text><circle cx="1607.2" cy="956" r="16" fill="none" stroke="#ffffff" stroke-width="2"/><text x="1607.2" y="965.1" font-size="26" fill="#ffffff" text-anchor="middle" font-weight="normal" stroke="#ffffff" stroke-width="0.9">4</text><circle cx="985.2" cy="581.6" r="9.6" fill="none" stroke="#7447d1" stroke-width="1.5"/><text x="985.2" y="586.484" font-size="18.5" fill="#7447d1" text-anchor="middle" font-weight="normal" stroke="#7447d1" stroke-width="0.5">w</text><circle cx="1012.4" cy="715.6" r="9.6" fill="none" stroke="#7447d1" stroke-width="1.5"/><text x="1012.4" y="720.484" font-size="18.5" fill="#7447d1" text-anchor="middle" font-weight="normal" stroke="#7447d1" stroke-width="0.5">x</text><circle cx="1130.6" cy="365.2" r="9.6" fill="none" stroke="#7447d1" stroke-width="1.5"/><text x="1130.6" y="371.59999999999997" font-size="15.5" fill="#7447d1" text-anchor="middle" font-weight="normal" stroke="#7447d1" stroke-width="0.5">Y</text><text x="508.3" y="621.4" font-size="15" fill="#ffffff" text-anchor="middle" font-weight="bold" stroke="#ffffff" stroke-width="0.15">A</text><text x="727.5" y="470" font-size="15" fill="#ffffff" text-anchor="middle" font-weight="bold" stroke="#ffffff" stroke-width="0.15">B</text><text x="734.2" y="653.5" font-size="15" fill="#ffffff" text-anchor="middle" font-weight="bold" stroke="#ffffff" stroke-width="0.15">C</text><text x="816" y="578.6" font-size="15" fill="#ffffff" text-anchor="middle" font-weight="bold" stroke="#ffffff" stroke-width="0.15">A</text><text x="856" y="520" font-size="15" fill="#ffffff" text-anchor="middle" font-weight="bold" stroke="#ffffff" stroke-width="0.15">B</text><text x="866.2" y="615" font-size="15" fill="#ffffff" text-anchor="middle" font-weight="bold" stroke="#ffffff" stroke-width="0.15">C</text><text x="1044.4" y="548.2" font-size="15" fill="#ffffff" text-anchor="middle" font-weight="bold" stroke="#ffffff" stroke-width="0.15">A</text><text x="1110.2" y="615.1" font-size="15" fill="#ffffff" text-anchor="middle" font-weight="bold" stroke="#ffffff" stroke-width="0.15">B</text><text x="1131.3" y="392" font-size="15" fill="#ffffff" text-anchor="middle" font-weight="bold" stroke="#ffffff" stroke-width="0.15">C</text><text x="1364.2" y="624.1" font-size="15" fill="#ffffff" text-anchor="middle" font-weight="bold" stroke="#ffffff" stroke-width="0.15">A</text><text x="1408.9" y="543.1" font-size="15" fill="#ffffff" text-anchor="middle" font-weight="bold" stroke="#ffffff" stroke-width="0.15">C</text><text x="1409.3" y="737.4" font-size="15" fill="#ffffff" text-anchor="middle" font-weight="bold" stroke="#ffffff" stroke-width="0.15">B</text><text x="891.5" y="505.3" font-size="24" fill="#089981" text-anchor="middle" font-weight="normal" stroke="#089981" stroke-width="0.45">b</text><text x="863" y="651.8" font-size="24" fill="#089981" text-anchor="middle" font-weight="normal" stroke="#089981" stroke-width="0.45">a</text><text x="937.3" y="741.7" font-size="24" fill="#089981" text-anchor="middle" font-weight="normal" stroke="#089981" stroke-width="0.45">c</text><text x="734.2" y="694.7" font-size="24" fill="#00bcd4" text-anchor="middle" font-weight="normal" stroke="#00bcd4" stroke-width="0.45">w</text><text x="801.5" y="467.6" font-size="24" fill="#00bcd4" text-anchor="middle" font-weight="normal" stroke="#00bcd4" stroke-width="0.45">x</text><text x="939.3" y="771.7" font-size="24" fill="#00bcd4" text-anchor="middle" font-weight="normal" stroke="#00bcd4" stroke-width="0.45">y</text><text x="1126.5" y="335" font-size="24" fill="#00bcd4" text-anchor="middle" font-weight="normal" stroke="#00bcd4" stroke-width="0.45">x</text><text x="1150.5" y="572" font-size="24" fill="#00bcd4" text-anchor="middle" font-weight="normal" stroke="#00bcd4" stroke-width="0.45">z</text><text x="1411.4" y="513" font-size="24" fill="#00bcd4" text-anchor="middle" font-weight="normal" stroke="#00bcd4" stroke-width="0.45">x</text><text x="1331.7" y="731" font-size="24" fill="#00bcd4" text-anchor="middle" font-weight="normal" stroke="#00bcd4" stroke-width="0.45">w</text><text x="1599.6" y="912" font-size="24" fill="#00bcd4" text-anchor="middle" font-weight="normal" stroke="#00bcd4" stroke-width="0.45">y</text><circle cx="1549" cy="1055.4" r="14.6" fill="#111" stroke="#ab47bc" stroke-width="2.2"/><path d="M1552.5 1049L1545.5 1056H1551.5L1546.5 1063" stroke="#ab47bc" stroke-width="2" fill="none"/><circle cx="1564.2" cy="1055.4" r="16.3" fill="#f23645"/><circle cx="1564.2" cy="1055.4" r="14" fill="#000"/><clipPath id="f1564"><circle cx="1564.2" cy="1055.4" r="12.2"/></clipPath><g clip-path="url(#f1564)"><rect x="1551.2" y="1042.4" width="26" height="26" fill="#f5f5f5"/><rect x="1551.2" y="1042.4" width="26" height="6.3" fill="#ee5555"/><rect x="1551.2" y="1053.2" width="26" height="4.4" fill="#ee5555"/><rect x="1551.2" y="1062.1000000000001" width="26" height="7" fill="#ee5555"/><rect x="1551.2" y="1042.4" width="15.7" height="15.2" fill="#2f8cf0"/><g fill="#fff"><circle cx="1556.0" cy="1046.9" r="1"/><circle cx="1560.0" cy="1046.9" r="1"/><circle cx="1556.0" cy="1050.9" r="1"/><circle cx="1560.0" cy="1050.9" r="1"/><circle cx="1564.0" cy="1050.9" r="1"/><circle cx="1556.0" cy="1054.9" r="1"/><circle cx="1560.0" cy="1054.9" r="1"/><circle cx="1564.0" cy="1054.9" r="1"/><circle cx="1564.0" cy="1046.9" r="1"/></g></g><circle cx="1660.2" cy="1055.4" r="16.3" fill="#f23645"/><circle cx="1660.2" cy="1055.4" r="14" fill="#000"/><clipPath id="f1660"><circle cx="1660.2" cy="1055.4" r="12.2"/></clipPath><g clip-path="url(#f1660)"><rect x="1647.2" y="1042.4" width="26" height="26" fill="#f5f5f5"/><rect x="1647.2" y="1042.4" width="26" height="6.3" fill="#ee5555"/><rect x="1647.2" y="1053.2" width="26" height="4.4" fill="#ee5555"/><rect x="1647.2" y="1062.1000000000001" width="26" height="7" fill="#ee5555"/><rect x="1647.2" y="1042.4" width="15.7" height="15.2" fill="#2f8cf0"/><g fill="#fff"><circle cx="1652.0" cy="1046.9" r="1"/><circle cx="1656.0" cy="1046.9" r="1"/><circle cx="1652.0" cy="1050.9" r="1"/><circle cx="1656.0" cy="1050.9" r="1"/><circle cx="1660.0" cy="1050.9" r="1"/><circle cx="1652.0" cy="1054.9" r="1"/><circle cx="1656.0" cy="1054.9" r="1"/><circle cx="1660.0" cy="1054.9" r="1"/><circle cx="1660.0" cy="1046.9" r="1"/></g></g><circle cx="1684.3" cy="1055.4" r="16.3" fill="#f23645"/><circle cx="1684.3" cy="1055.4" r="14" fill="#000"/><clipPath id="f1684"><circle cx="1684.3" cy="1055.4" r="12.2"/></clipPath><g clip-path="url(#f1684)"><rect x="1671.3" y="1042.4" width="26" height="26" fill="#f5f5f5"/><rect x="1671.3" y="1042.4" width="26" height="6.3" fill="#ee5555"/><rect x="1671.3" y="1053.2" width="26" height="4.4" fill="#ee5555"/><rect x="1671.3" y="1062.1000000000001" width="26" height="7" fill="#ee5555"/><rect x="1671.3" y="1042.4" width="15.7" height="15.2" fill="#2f8cf0"/><g fill="#fff"><circle cx="1676.1" cy="1046.9" r="1"/><circle cx="1680.1" cy="1046.9" r="1"/><circle cx="1676.1" cy="1050.9" r="1"/><circle cx="1680.1" cy="1050.9" r="1"/><circle cx="1684.1" cy="1050.9" r="1"/><circle cx="1676.1" cy="1054.9" r="1"/><circle cx="1680.1" cy="1054.9" r="1"/><circle cx="1684.1" cy="1054.9" r="1"/><circle cx="1684.1" cy="1046.9" r="1"/></g></g><g clip-path="url(#paxis)"><text x="2099.4" y="187.9" font-size="18" fill="#b2b5be" text-anchor="end" font-weight="normal" textLength="87.6" lengthAdjust="spacingAndGlyphs" stroke="#b2b5be" stroke-width="0.45">130.000,00</text><text x="2099.4" y="246.95" font-size="18" fill="#b2b5be" text-anchor="end" font-weight="normal" textLength="87.6" lengthAdjust="spacingAndGlyphs" stroke="#b2b5be" stroke-width="0.45">128.000,00</text><text x="2099.4" y="306.0" font-size="18" fill="#b2b5be" text-anchor="end" font-weight="normal" textLength="87.6" lengthAdjust="spacingAndGlyphs" stroke="#b2b5be" stroke-width="0.45">126.000,00</text><text x="2099.4" y="365.05" font-size="18" fill="#b2b5be" text-anchor="end" font-weight="normal" textLength="87.6" lengthAdjust="spacingAndGlyphs" stroke="#b2b5be" stroke-width="0.45">124.000,00</text><text x="2099.4" y="424.09999999999997" font-size="18" fill="#b2b5be" text-anchor="end" font-weight="normal" textLength="87.6" lengthAdjust="spacingAndGlyphs" stroke="#b2b5be" stroke-width="0.45">122.000,00</text><text x="2099.4" y="483.15000000000003" font-size="18" fill="#b2b5be" text-anchor="end" font-weight="normal" textLength="87.6" lengthAdjust="spacingAndGlyphs" stroke="#b2b5be" stroke-width="0.45">120.000,00</text><text x="2099.4" y="542.1999999999999" font-size="18" fill="#b2b5be" text-anchor="end" font-weight="normal" textLength="87.6" lengthAdjust="spacingAndGlyphs" stroke="#b2b5be" stroke-width="0.45">118.000,00</text><text x="2099.4" y="601.2499999999999" font-size="18" fill="#b2b5be" text-anchor="end" font-weight="normal" textLength="87.6" lengthAdjust="spacingAndGlyphs" stroke="#b2b5be" stroke-width="0.45">116.000,00</text><text x="2099.4" y="660.3" font-size="18" fill="#b2b5be" text-anchor="end" font-weight="normal" textLength="87.6" lengthAdjust="spacingAndGlyphs" stroke="#b2b5be" stroke-width="0.45">114.000,00</text><text x="2099.4" y="778.4" font-size="18" fill="#b2b5be" text-anchor="end" font-weight="normal" textLength="87.6" lengthAdjust="spacingAndGlyphs" stroke="#b2b5be" stroke-width="0.45">110.000,00</text><text x="2099.4" y="837.4499999999999" font-size="18" fill="#b2b5be" text-anchor="end" font-weight="normal" textLength="87.6" lengthAdjust="spacingAndGlyphs" stroke="#b2b5be" stroke-width="0.45">108.000,00</text><text x="2099.4" y="896.4999999999999" font-size="18" fill="#b2b5be" text-anchor="end" font-weight="normal" textLength="87.6" lengthAdjust="spacingAndGlyphs" stroke="#b2b5be" stroke-width="0.45">106.000,00</text><text x="2099.4" y="955.55" font-size="18" fill="#b2b5be" text-anchor="end" font-weight="normal" textLength="87.6" lengthAdjust="spacingAndGlyphs" stroke="#b2b5be" stroke-width="0.45">104.000,00</text><text x="2099.4" y="1014.5999999999999" font-size="18" fill="#b2b5be" text-anchor="end" font-weight="normal" textLength="87.6" lengthAdjust="spacingAndGlyphs" stroke="#b2b5be" stroke-width="0.45">102.000,00</text><text x="2099.4" y="1073.6499999999999" font-size="18" fill="#b2b5be" text-anchor="end" font-weight="normal" textLength="87.6" lengthAdjust="spacingAndGlyphs" stroke="#b2b5be" stroke-width="0.45">100.000,00</text></g><path d="M1998 116H2105.5Q2108 116 2108 118.5V139.5Q2108 142 2105.5 142H1998Z" fill="#f23645"/><path d="M1998 142H2105.5Q2108 142 2108 144.5V166.5Q2108 169 2105.5 169H1998Z" fill="#2962ff"/><text x="2099.4" y="134" font-size="18" fill="#ffffff" text-anchor="end" font-weight="normal" textLength="87.6" lengthAdjust="spacingAndGlyphs" stroke="#ffffff" stroke-width="0.45">131.630,97</text><text x="2099.4" y="160.5" font-size="18" fill="#ffffff" text-anchor="end" font-weight="normal" textLength="87.6" lengthAdjust="spacingAndGlyphs" stroke="#ffffff" stroke-width="0.45">130.945,77</text><path d="M1924.5 698H1997.5V725H1924.5Q1922 725 1922 722.5V700.5Q1922 698 1924.5 698Z" fill="#26a69a"/><path d="M1998 698H2105.5Q2108 698 2108 700.5V743.5Q2108 746 2105.5 746H1998Z" fill="#26a69a"/><text x="1958.6" y="718.1" font-size="18" fill="#ffffff" text-anchor="middle" font-weight="normal" textLength="62" lengthAdjust="spacingAndGlyphs" stroke="#ffffff" stroke-width="0.45">BTCUSD</text><text x="2012" y="716.1" font-size="18" fill="#ffffff" text-anchor="start" font-weight="normal" textLength="87" lengthAdjust="spacingAndGlyphs" stroke="#ffffff" stroke-width="0.45">112.121,69</text><text x="2011" y="736.8" font-size="18" fill="#d6efeb" text-anchor="start" font-weight="normal" textLength="44" lengthAdjust="spacingAndGlyphs" stroke="#d6efeb" stroke-width="0.45">42:12</text><rect x="2003" y="47" width="104" height="38" rx="5" fill="#0f0f0f" stroke="#3a3a3c" stroke-width="1.5"/><text x="2017.7" y="71.9" font-size="18" fill="#e0e0e0" text-anchor="start" font-weight="normal" textLength="30.1" lengthAdjust="spacingAndGlyphs" stroke="#e0e0e0" stroke-width="0.45">USD</text><g clip-path="url(#taxis)"><text x="23.6" y="1103.6" font-size="18" fill="#b2b5be" text-anchor="middle" font-weight="normal" stroke="#b2b5be" stroke-width="0.45">25</text><text x="164.5" y="1103.6" font-size="18" fill="#b2b5be" text-anchor="middle" font-weight="bold" stroke="#b2b5be" stroke-width="0.45">Jul</text><text x="258.4" y="1103.6" font-size="18" fill="#b2b5be" text-anchor="middle" font-weight="normal" stroke="#b2b5be" stroke-width="0.45">5</text><text x="352.4" y="1103.6" font-size="18" fill="#b2b5be" text-anchor="middle" font-weight="normal" stroke="#b2b5be" stroke-width="0.45">9</text><text x="446.3" y="1103.6" font-size="18" fill="#b2b5be" text-anchor="middle" font-weight="normal" stroke="#b2b5be" stroke-width="0.45">13</text><text x="540.3" y="1103.6" font-size="18" fill="#b2b5be" text-anchor="middle" font-weight="normal" stroke="#b2b5be" stroke-width="0.45">17</text><text x="634.2" y="1103.6" font-size="18" fill="#b2b5be" text-anchor="middle" font-weight="normal" stroke="#b2b5be" stroke-width="0.45">21</text><text x="728.1" y="1103.6" font-size="18" fill="#b2b5be" text-anchor="middle" font-weight="normal" stroke="#b2b5be" stroke-width="0.45">25</text><text x="892.5" y="1103.6" font-size="18" fill="#b2b5be" text-anchor="middle" font-weight="bold" stroke="#b2b5be" stroke-width="0.45">Aug</text><text x="986.5" y="1103.6" font-size="18" fill="#b2b5be" text-anchor="middle" font-weight="normal" stroke="#b2b5be" stroke-width="0.45">5</text><text x="1080.4" y="1103.6" font-size="18" fill="#b2b5be" text-anchor="middle" font-weight="normal" stroke="#b2b5be" stroke-width="0.45">9</text><text x="1174.4" y="1103.6" font-size="18" fill="#b2b5be" text-anchor="middle" font-weight="normal" stroke="#b2b5be" stroke-width="0.45">13</text><text x="1268.3" y="1103.6" font-size="18" fill="#b2b5be" text-anchor="middle" font-weight="normal" stroke="#b2b5be" stroke-width="0.45">17</text><text x="1362.2" y="1103.6" font-size="18" fill="#b2b5be" text-anchor="middle" font-weight="normal" stroke="#b2b5be" stroke-width="0.45">21</text><text x="1456.2" y="1103.6" font-size="18" fill="#b2b5be" text-anchor="middle" font-weight="normal" stroke="#b2b5be" stroke-width="0.45">25</text><text x="1620.6" y="1103.6" font-size="18" fill="#b2b5be" text-anchor="middle" font-weight="bold" stroke="#b2b5be" stroke-width="0.45">Sep</text><text x="1714.5" y="1103.6" font-size="18" fill="#b2b5be" text-anchor="middle" font-weight="normal" stroke="#b2b5be" stroke-width="0.45">5</text><text x="1808.5" y="1103.6" font-size="18" fill="#b2b5be" text-anchor="middle" font-weight="normal" stroke="#b2b5be" stroke-width="0.45">9</text><text x="1902.4" y="1103.6" font-size="18" fill="#b2b5be" text-anchor="middle" font-weight="normal" stroke="#b2b5be" stroke-width="0.45">13</text></g><text x="1991.2" y="1103.6" font-size="18" fill="#b2b5be" text-anchor="middle" font-weight="normal" stroke="#b2b5be" stroke-width="0.45">1</text><text x="27" y="69.7" font-size="17.4" fill="#d1d4dc" text-anchor="start" font-weight="normal" textLength="255.8" lengthAdjust="spacingAndGlyphs" stroke="#d1d4dc" stroke-width="0.45">Bitcoin / Dollar · 1h · COINBASE</text><text x="294.3" y="69.7" font-size="17.4" fill="#d1d4dc" text-anchor="start" font-weight="normal" textLength="12.5" lengthAdjust="spacingAndGlyphs" stroke="#d1d4dc" stroke-width="0.45">O</text><text x="307.5" y="69.7" font-size="17.4" fill="#22ab94" text-anchor="start" font-weight="normal" textLength="87.1" lengthAdjust="spacingAndGlyphs" stroke="#22ab94" stroke-width="0.45">111.906,28</text><text x="406.8" y="69.7" font-size="17.4" fill="#d1d4dc" text-anchor="start" font-weight="normal" textLength="11.5" lengthAdjust="spacingAndGlyphs" stroke="#d1d4dc" stroke-width="0.45">H</text><text x="419.3" y="69.7" font-size="17.4" fill="#22ab94" text-anchor="start" font-weight="normal" textLength="87.7" lengthAdjust="spacingAndGlyphs" stroke="#22ab94" stroke-width="0.45">112.158,74</text><text x="517.9" y="69.7" font-size="17.4" fill="#d1d4dc" text-anchor="start" font-weight="normal" textLength="9" lengthAdjust="spacingAndGlyphs" stroke="#d1d4dc" stroke-width="0.45">L</text><text x="527.8" y="69.7" font-size="17.4" fill="#22ab94" text-anchor="start" font-weight="normal" textLength="87.2" lengthAdjust="spacingAndGlyphs" stroke="#22ab94" stroke-width="0.45">111.897,19</text><text x="626.3" y="69.7" font-size="17.4" fill="#d1d4dc" text-anchor="start" font-weight="normal" textLength="11.5" lengthAdjust="spacingAndGlyphs" stroke="#d1d4dc" stroke-width="0.45">C</text><text x="638.5" y="69.7" font-size="17.4" fill="#22ab94" text-anchor="start" font-weight="normal" textLength="87" lengthAdjust="spacingAndGlyphs" stroke="#22ab94" stroke-width="0.45">112.121,69</text><text x="738.1" y="69.7" font-size="17.4" fill="#22ab94" text-anchor="start" font-weight="normal" textLength="135.3" lengthAdjust="spacingAndGlyphs" stroke="#22ab94" stroke-width="0.45">+215,41 (+0,19%)</text><text x="27" y="95.8" font-size="17.4" fill="#d1d4dc" text-anchor="start" font-weight="normal" textLength="132.5" lengthAdjust="spacingAndGlyphs" stroke="#d1d4dc" stroke-width="0.45">EMA (200, close)</text><text x="171.7" y="95.8" font-size="17.4" fill="#f23645" text-anchor="start" font-weight="normal" textLength="87.4" lengthAdjust="spacingAndGlyphs" stroke="#f23645" stroke-width="0.45">113.022,53</text><text x="15.7" y="28.9" font-size="18.5" fill="#dbdbdb" text-anchor="start" font-weight="normal" textLength="512.2" lengthAdjust="spacingAndGlyphs" stroke="#dbdbdb" stroke-width="0.45">Demut erstellt mit TradingView.com, Aug 28, 2025 23:17 UTC+2</text><path d="M17.9 1150H36V1172.7H26.5V1158.9H17.9Z" fill="#dadada"/><circle cx="43.2" cy="1154.4" r="4.5" fill="#dadada"/><path d="M50.9 1150H62.8L53.4 1172.7H43.6Z" fill="#dadada"/><text x="73.5" y="1172.7" font-size="33" fill="#dadada" text-anchor="start" font-weight="bold" textLength="181.4" lengthAdjust="spacingAndGlyphs">TradingView</text>
</svg></body></html>
